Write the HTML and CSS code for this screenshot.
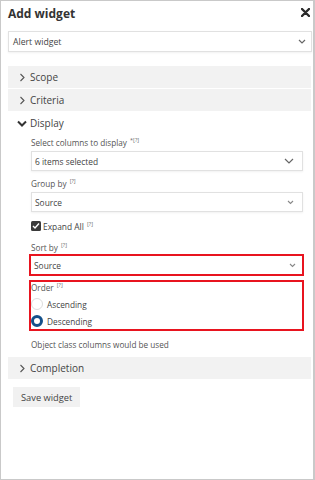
FILE: index.html
```html
<!DOCTYPE html>
<html lang="en">
  <head>
    <meta charset="UTF-8" />
    <title>Add widget</title>
    <link rel="stylesheet" href="styles.css">
  </head>
  <body>
    <div class="panel">
      <div class="header">
        <h1>Add widget</h1>
        <span class="close">
          <svg width="9" height="9" viewBox="0 0 9 9"><path d="M1 1L8 8M8 1L1 8" stroke="#2b2b2b" stroke-width="2.4" stroke-linecap="round"/></svg>
        </span>
      </div>

      <div class="select top-select">
        <span>Alert widget</span>
        <svg class="chev" width="8" height="5" viewBox="0 0 8 5"><path d="M1 1l3 3l3-3" fill="none" stroke="#666" stroke-width="1.2"/></svg>
      </div>

      <div class="accordion">
        <div class="acc-head closed">
          <svg class="arrow" width="6" height="9" viewBox="0 0 6 9"><path d="M1 1l3.5 3.5L1 8" fill="none" stroke="#555" stroke-width="1.1"/></svg>
          <span>Scope</span>
        </div>
        <div class="acc-head closed">
          <svg class="arrow" width="6" height="9" viewBox="0 0 6 9"><path d="M1 1l3.5 3.5L1 8" fill="none" stroke="#555" stroke-width="1.1"/></svg>
          <span>Criteria</span>
        </div>
        <div class="acc-head open">
          <svg class="arrow down" width="10" height="7" viewBox="0 0 10 7"><path d="M1 1.5l4 4l4-4" fill="none" stroke="#333" stroke-width="2"/></svg>
          <span>Display</span>
        </div>

        <div class="acc-body">
          <div class="label first">Select columns to display <sup>*[?]</sup></div>
          <div class="select">
            <span>6 items selected</span>
            <svg class="chev" width="10" height="6" viewBox="0 0 10 6"><path d="M1 1l4 4l4-4" fill="none" stroke="#666" stroke-width="1.2"/></svg>
          </div>

          <div class="label">Group by <sup>[?]</sup></div>
          <div class="select">
            <span>Source</span>
            <svg class="chev" width="7" height="5" viewBox="0 0 7 5"><path d="M1 1l2.5 2.5L6 1" fill="none" stroke="#888" stroke-width="1.1"/></svg>
          </div>

          <div class="check-row">
            <span class="checkbox">
              <svg width="10" height="10" viewBox="0 0 10 10"><rect x="0" y="0" width="10" height="10" rx="1.5" fill="#3a3a3a"/><path d="M2 5l2 2l4-4.5" fill="none" stroke="#fff" stroke-width="1.4"/></svg>
            </span>
            <span>Expand All <sup>[?]</sup></span>
          </div>

          <div class="label sort">Sort by <sup>[?]</sup></div>
          <div class="mark sort-box">
            <span>Source</span>
            <svg class="chev" width="7" height="5" viewBox="0 0 7 5"><path d="M1 1l2.5 2.5L6 1" fill="none" stroke="#888" stroke-width="1.1"/></svg>
          </div>

          <div class="mark order-box">
            <div class="order-label">Order <sup>[?]</sup></div>
            <div class="radio-row first">
              <span class="radio"></span>
              <span>Ascending</span>
            </div>
            <div class="radio-row">
              <span class="radio on"></span>
              <span>Descending</span>
            </div>
          </div>

          <div class="note">Object class columns would be used</div>
        </div>

        <div class="acc-head closed">
          <svg class="arrow" width="6" height="9" viewBox="0 0 6 9"><path d="M1 1l3.5 3.5L1 8" fill="none" stroke="#555" stroke-width="1.1"/></svg>
          <span>Completion</span>
        </div>
      </div>

      <button class="save">Save widget</button>
    </div>
  </body>
</html>
```

FILE: styles.css
```css
* {
  box-sizing: border-box;
}
body {
  margin: 0;
  background: #fff;
  font-family: "Open Sans", "Noto Sans", sans-serif;
  color: #3a3a3a;
}
.panel {
  width: 315px;
  height: 480px;
  border: 1px solid #c9c9c9;
  border-right-width: 2px;
  padding: 0 1px 0 7px;
}
.header {
  height: 24px;
  display: flex;
  align-items: center;
  justify-content: space-between;
}
h1 {
  margin: 0;
  font-size: 12px;
  font-weight: 700;
  color: #333;
}
.close {
  display: flex;
  margin-right: 2px;
  margin-top: -2px;
}
.select {
  height: 20px;
  border: 1px solid #e1e1e1;
  box-shadow: 0 1px 2px rgba(0, 0, 0, 0.06);
  display: flex;
  align-items: center;
  justify-content: space-between;
  padding: 0 8px 0 3px;
  font-size: 8.4px;
  color: #444;
}
.top-select {
  margin-top: 6px;
  height: 21px;
  padding: 0 5px 0 4px;
  font-size: 8.7px;
}
.accordion {
  margin-top: 14px;
  margin-right: 1px;
}
.acc-head {
  height: 22px;
  display: flex;
  align-items: center;
  font-size: 10px;
  color: #444;
  margin-bottom: 1px;
}
.acc-head.closed {
  background: #f2f2f2;
}
.acc-head .arrow {
  margin-left: 7px;
  width: 15px;
}
.acc-head .arrow.down {
  margin-left: 6px;
  width: 16px;
}
.acc-body {
  padding: 0 8px 6px 23px;
}
.label {
  font-size: 8.2px;
  color: #555;
  line-height: 12px;
  margin-top: 7px;
  margin-bottom: 2px;
}
.label.first {
  margin-top: 3px;
}
sup {
  font-size: 5.5px;
  line-height: 0;
  vertical-align: 4px;
  color: #666;
  margin-left: 1px;
}
.check-row {
  margin-top: 8px;
  height: 12px;
  display: flex;
  align-items: center;
  gap: 2px;
  font-size: 8.4px;
  color: #444;
}
.checkbox {
  display: flex;
}
.label.sort {
  margin-top: 10px;
  margin-bottom: 0;
}
.mark {
  border: 2px solid #e8141f;
  margin-left: -2px;
  margin-right: -1px;
}
.sort-box {
  height: 22px;
  display: flex;
  align-items: center;
  justify-content: space-between;
  padding: 0 6px 0 3px;
  font-size: 8.4px;
  color: #444;
}
.order-box {
  margin-top: 4px;
  height: 51px;
}
.order-label {
  font-size: 8.2px;
  color: #555;
  line-height: 12px;
}
.radio-row {
  display: flex;
  align-items: center;
  gap: 4px;
  height: 16px;
  margin-top: 1px;
  font-size: 8.3px;
  color: #444;
}
.radio-row.first {
  margin-top: 2px;
}
.radio {
  width: 12px;
  height: 12px;
  border-radius: 50%;
  border: 1px solid #dcdcdc;
  background: #fff;
}
.radio.on {
  border: 3px solid #14508a;
}
.note {
  margin-top: 8px;
  font-size: 8.2px;
  color: #555;
  line-height: 12px;
}
.save {
  margin: 7px 0 0 5px;
  height: 20px;
  padding: 0 8px;
  border: none;
  background: #f1f1f1;
  font-family: inherit;
  font-size: 9.3px;
  color: #444;
}
```
